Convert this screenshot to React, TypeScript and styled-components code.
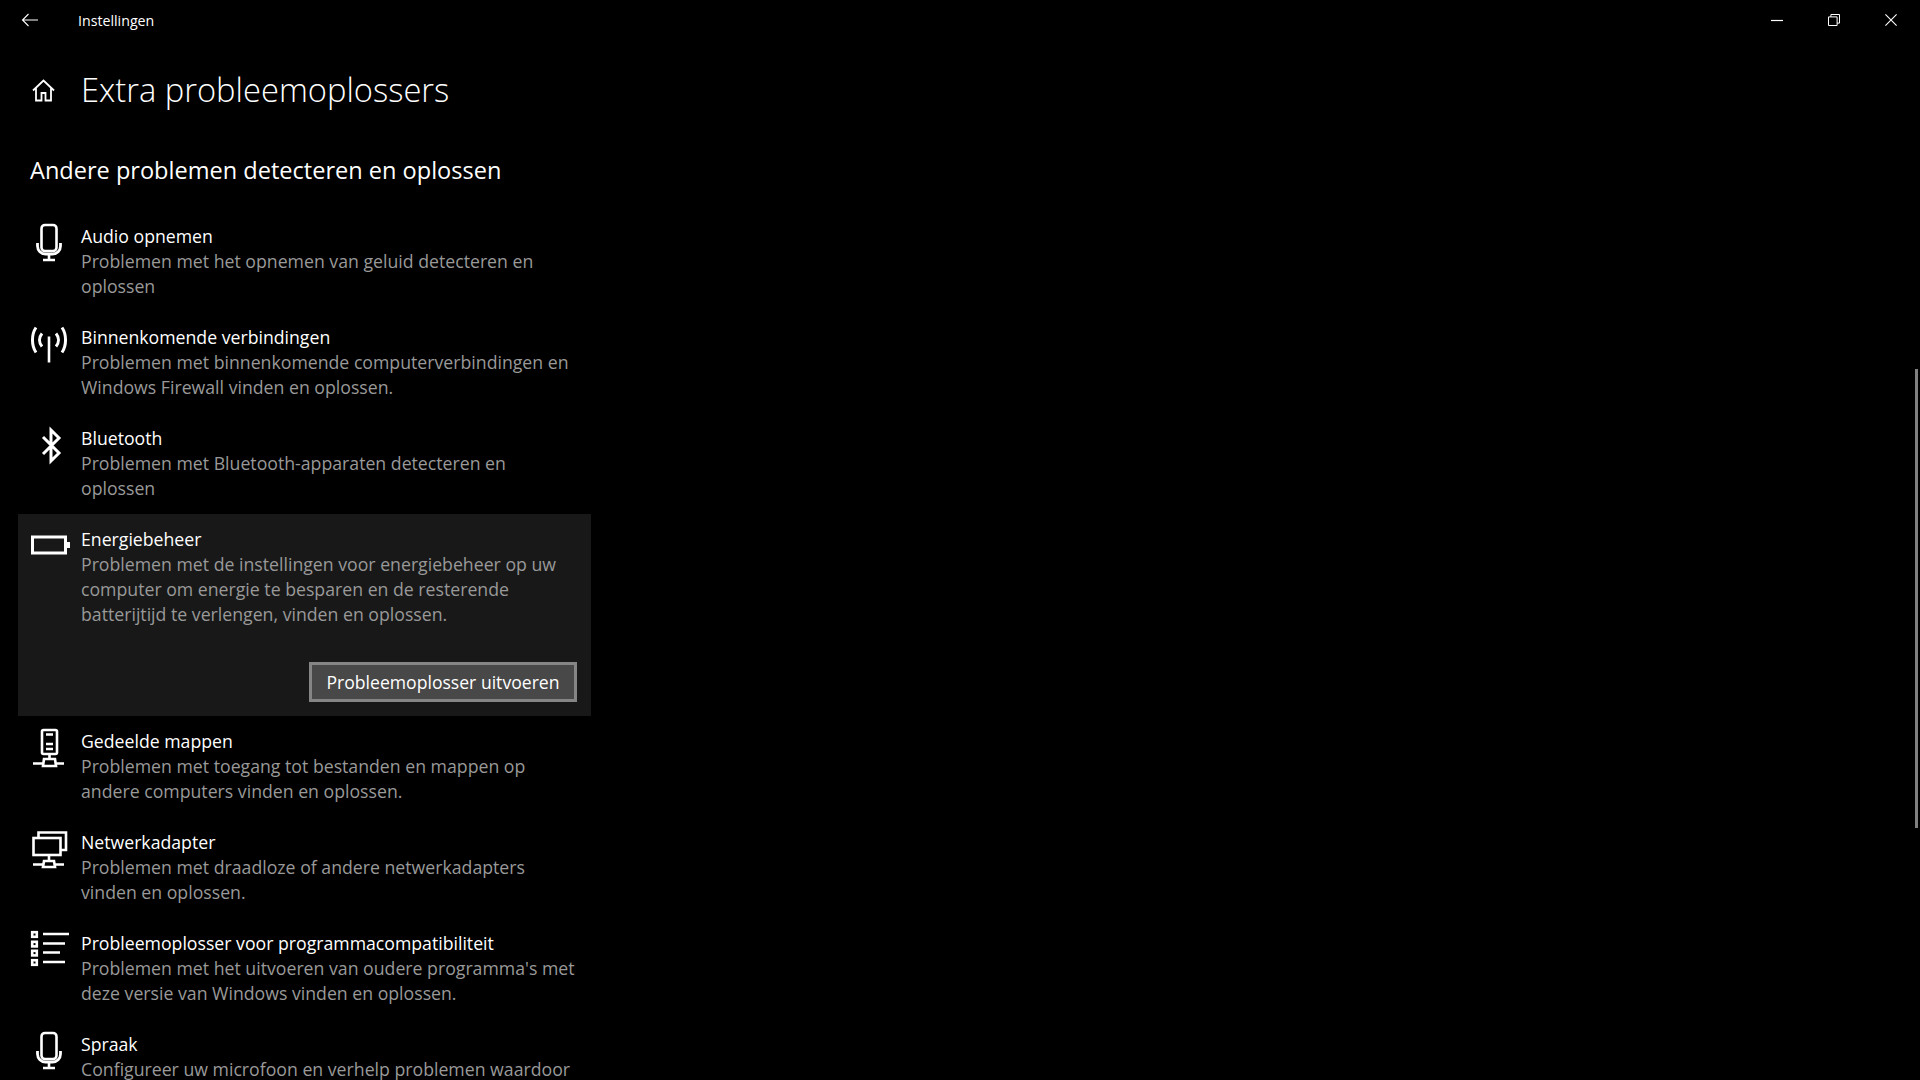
import React from "react";
import styled, { createGlobalStyle } from "styled-components";

const Global = createGlobalStyle`
  html, body { margin: 0; padding: 0; background: #000; height: 100%; overflow: hidden; }
  #root { height: 100%; }
`;

const FONT = `"Open Sans", "Noto Sans", "Liberation Sans", sans-serif`;

const Page = styled.div`
  position: relative;
  width: 1920px;
  height: 1080px;
  overflow: hidden;
  background: #000;
  color: #fff;
  font-family: ${FONT};
`;

const TopBar = styled.header`
  display: flex;
  align-items: center;
  height: 40px;
  padding-left: 21px;
`;

const BackIcon = styled.svg`
  width: 18px;
  height: 14px;
  margin-right: 39px;
  display: block;
`;

const AppName = styled.span`
  font-size: 14.2px;
  line-height: 20px;
  padding-top: 2px;
`;

const WindowControls = styled.div`
  display: flex;
  align-items: center;
  margin-left: auto;
  padding-right: 23px;
  gap: 45px;
`;

const ControlIcon = styled.svg`
  width: 12px;
  height: 12px;
  display: block;
`;

const TitleRow = styled.div`
  display: flex;
  align-items: center;
  height: 60px;
  margin-top: 20px;
  padding-left: 32px;
`;

const HomeIcon = styled.svg`
  width: 23px;
  height: 23px;
  margin-right: 26px;
  display: block;
`;

const PageTitle = styled.h1`
  margin: 0;
  font-size: 32.7px;
  font-weight: 300;
  line-height: 44px;
`;

const SectionHeading = styled.h2`
  margin: 30px 0 20.5px 30px;
  font-size: 23.55px;
  font-weight: 400;
  line-height: 40px;
`;

const List = styled.div`
  display: flex;
  flex-direction: column;
  width: 573px;
  margin-left: 18px;
`;

const Row = styled.div<{ $active?: boolean }>`
  display: flex;
  flex-direction: column;
  padding: 13px 14px ${(p) => (p.$active ? "14px" : "13px")} 12px;
  background: ${(p) => (p.$active ? "#181818" : "transparent")};
`;

const RowMain = styled.div`
  display: flex;
  gap: 11px;
`;

const IconSlot = styled.svg`
  flex: none;
  width: 40px;
  height: 40px;
  display: block;
  margin-top: -1px;
`;

const RowText = styled.div`
  display: flex;
  flex-direction: column;
`;

const RowTitle = styled.span`
  font-size: 17.68px;
  line-height: 25px;
  white-space: nowrap;
`;

const RowLine = styled.span`
  font-size: 17.7px;
  line-height: 25px;
  color: #999;
  white-space: nowrap;
`;

const RunButton = styled.button`
  align-self: flex-end;
  width: 268px;
  height: 40px;
  margin-top: 35.5px;
  padding: 0;
  border: 3px solid #858585;
  background: #484848;
  color: #fff;
  font-family: ${FONT};
  font-size: 17.6px;
  line-height: 25px;
`;

const ScrollThumb = styled.div`
  position: absolute;
  top: 369px;
  right: 2px;
  width: 3px;
  height: 459px;
  background: #808080;
`;

const stroke = { fill: "none", stroke: "#fff", strokeWidth: 2.6 } as const;

const Mic = () => (
  <g {...stroke}>
    <rect x="11.5" y="2" width="15" height="26" rx="3.5" />
    <path d="M7.5 20v3a8 8 0 0 0 8 8h7a8 8 0 0 0 8-8v-3" strokeWidth="2.8" />
    <path d="M19 31v6M13 37h12" />
  </g>
);

const Antenna = () => (
  <g {...stroke}>
    <path d="M19 12.5v26" />
    <path d="M12 9.5c-3.3 4-3.3 9 0 13M26 9.5c3.3 4 3.3 9 0 13" strokeWidth="3" />
    <path d="M6 3.5c-4.7 7-4.7 18 0 25M32 3.5c4.7 7 4.7 18 0 25" strokeWidth="3" />
  </g>
);

const BluetoothIcon = () => (
  <g {...stroke} strokeWidth="3">
    <path d="M13 12l16 16-8 8V5l8 8-16 16" />
  </g>
);

const Battery = () => (
  <g>
    <rect x="2.5" y="11" width="33" height="16" fill="none" stroke="#fff" strokeWidth="3" />
    <rect x="36.5" y="16" width="3.5" height="6" fill="#fff" />
  </g>
);

const Server = () => (
  <g {...stroke}>
    <rect x="12" y="2" width="15" height="24" rx="1.5" />
    <path d="M16 6.5h7M16 16h7M16 21h7" />
    <path d="M19.5 26v5M13 38l1-7h11l1 7zM3 35.5h10M26 35.5h8" />
  </g>
);

const Network = () => (
  <g {...stroke}>
    <path d="M8.5 9V3.5h27.5V21h-5" />
    <rect x="3.5" y="9" width="27" height="17" />
    <path d="M19 26v6M13 38l1-6h10l1 6zM3 35.5h10M25 35.5h9" />
  </g>
);

const ListIcon = () => (
  <g>
    {[2.2, 11.8, 20.8, 30.2].map((y) => (
      <rect key={y} x="2.2" y={y} width="4.6" height="4.6" fill="none" stroke="#fff" strokeWidth="2.6" />
    ))}
    <path d="M13 4h26M13 13.5h22M13 22.5h17M13 32h22" stroke="#fff" strokeWidth="2.6" fill="none" />
  </g>
);

type Item = {
  title: string;
  lines: string[];
  icon: React.ReactNode;
  active?: boolean;
};

const items: Item[] = [
  {
    title: "Audio opnemen",
    lines: ["Problemen met het opnemen van geluid detecteren en", "oplossen"],
    icon: <Mic />,
  },
  {
    title: "Binnenkomende verbindingen",
    lines: ["Problemen met binnenkomende computerverbindingen en", "Windows Firewall vinden en oplossen."],
    icon: <Antenna />,
  },
  {
    title: "Bluetooth",
    lines: ["Problemen met Bluetooth-apparaten detecteren en", "oplossen"],
    icon: <BluetoothIcon />,
  },
  {
    title: "Energiebeheer",
    lines: [
      "Problemen met de instellingen voor energiebeheer op uw",
      "computer om energie te besparen en de resterende",
      "batterijtijd te verlengen, vinden en oplossen.",
    ],
    icon: <Battery />,
    active: true,
  },
  {
    title: "Gedeelde mappen",
    lines: ["Problemen met toegang tot bestanden en mappen op", "andere computers vinden en oplossen."],
    icon: <Server />,
  },
  {
    title: "Netwerkadapter",
    lines: ["Problemen met draadloze of andere netwerkadapters", "vinden en oplossen."],
    icon: <Network />,
  },
  {
    title: "Probleemoplosser voor programmacompatibiliteit",
    lines: ["Problemen met het uitvoeren van oudere programma's met", "deze versie van Windows vinden en oplossen."],
    icon: <ListIcon />,
  },
  {
    title: "Spraak",
    lines: ["Configureer uw microfoon en verhelp problemen waardoor"],
    icon: <Mic />,
  },
];

export default function App() {
  return (
    <Page>
      <Global />
      <TopBar>
        <BackIcon viewBox="0 0 18 14">
          <path d="M17 7H1.5M7.5 1 1.5 7l6 6" fill="none" stroke="#fff" strokeWidth="1.1" />
        </BackIcon>
        <AppName>Instellingen</AppName>
        <WindowControls>
          <ControlIcon viewBox="0 0 12 12">
            <path d="M0 6.5h12" stroke="#fff" strokeWidth="1.2" />
          </ControlIcon>
          <ControlIcon viewBox="0 0 12 12">
            <path d="M.5 2.9h8.6v8.6H.5zM2.9 2.9V.5h8.6v8.6H9.1" fill="none" stroke="#fff" strokeWidth="1" />
          </ControlIcon>
          <ControlIcon viewBox="0 0 12 12">
            <path d="M.4.4l11.2 11.2M11.6.4.4 11.6" stroke="#fff" strokeWidth="1.1" />
          </ControlIcon>
        </WindowControls>
      </TopBar>

      <TitleRow>
        <HomeIcon viewBox="0 0 23 23">
          <path d="M1 11.5 11.5 1.5 22 11.5M4 9v12.5h5.5V14h4v7.5H19V9" fill="none" stroke="#fff" strokeWidth="1.8" />
        </HomeIcon>
        <PageTitle>Extra probleemoplossers</PageTitle>
      </TitleRow>

      <SectionHeading>Andere problemen detecteren en oplossen</SectionHeading>

      <List>
        {items.map((item) => (
          <Row key={item.title} $active={item.active}>
            <RowMain>
              <IconSlot viewBox="0 0 40 40">{item.icon}</IconSlot>
              <RowText>
                <RowTitle>{item.title}</RowTitle>
                {item.lines.map((line) => (
                  <RowLine key={line}>{line}</RowLine>
                ))}
              </RowText>
            </RowMain>
            {item.active && <RunButton>Probleemoplosser uitvoeren</RunButton>}
          </Row>
        ))}
      </List>

      <ScrollThumb />
    </Page>
  );
}
